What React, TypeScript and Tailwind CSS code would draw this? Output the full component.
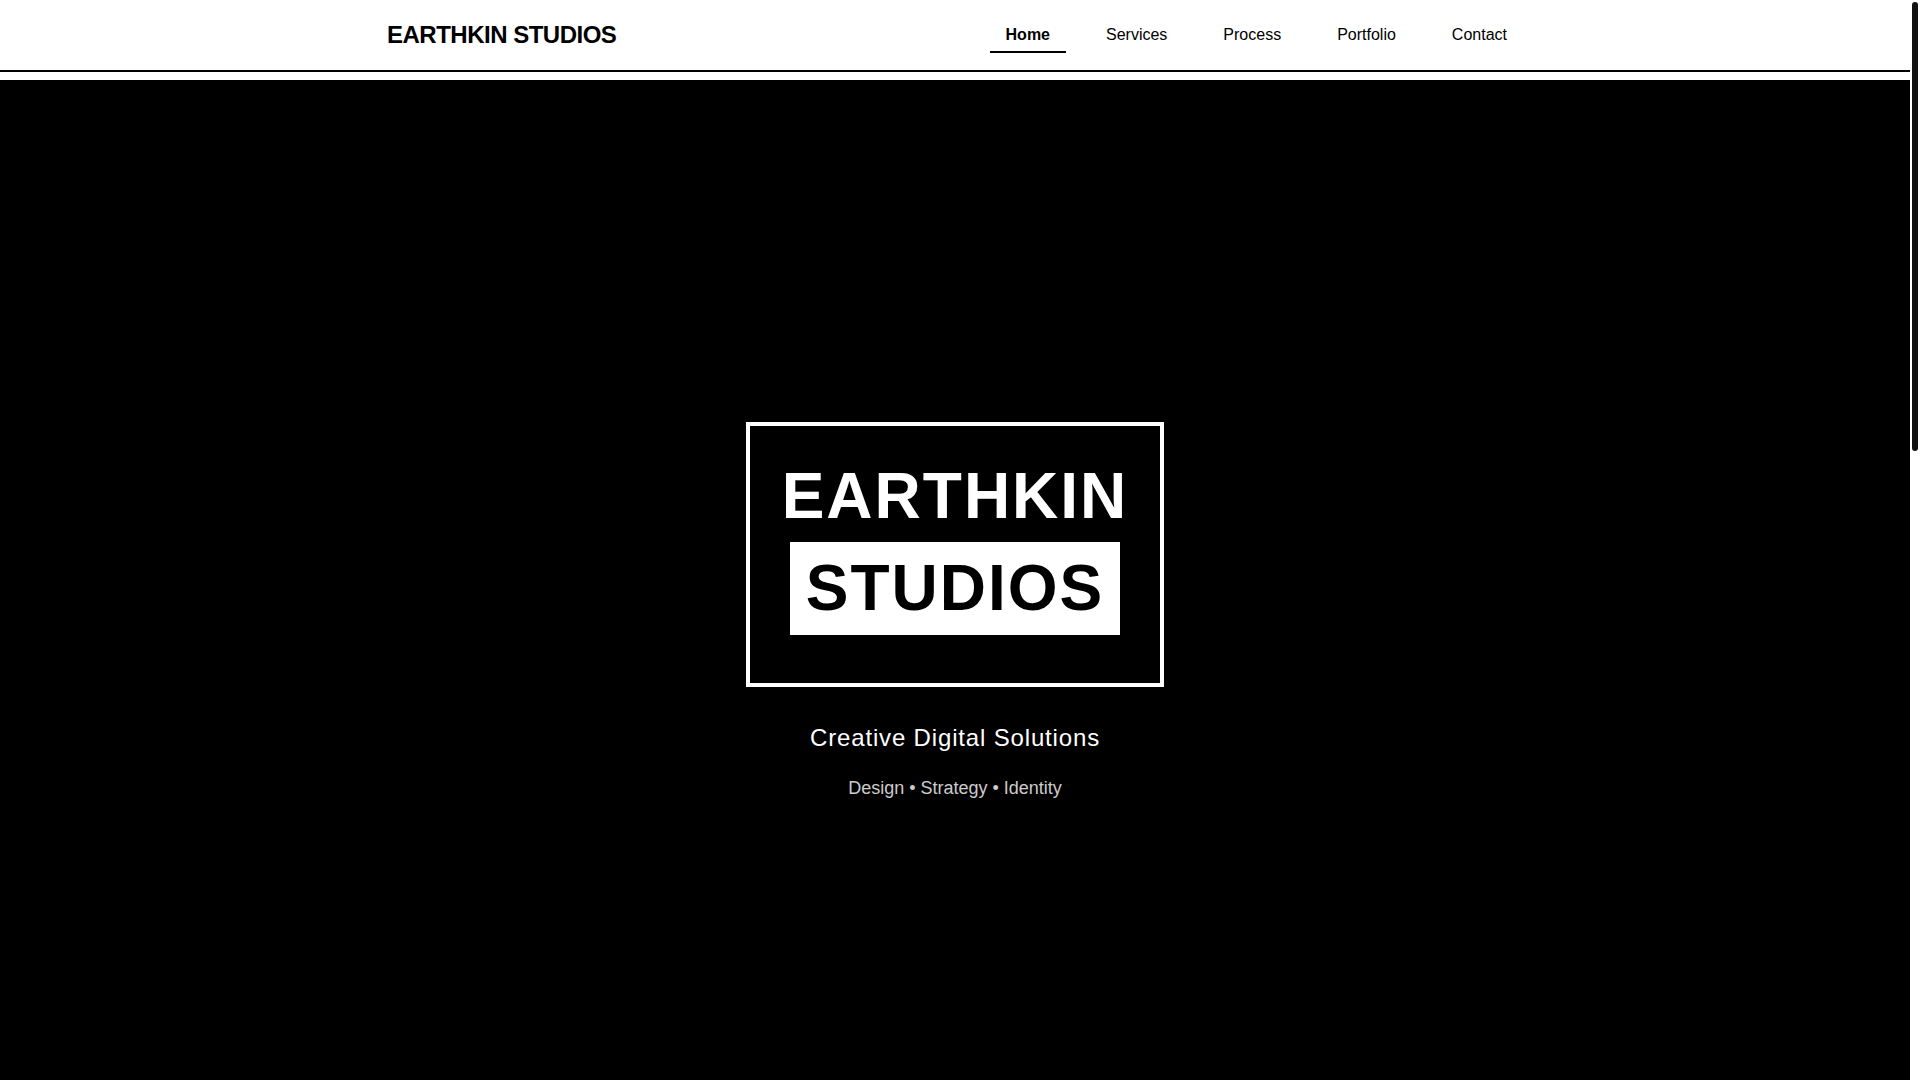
const links = [
  { label: "Home", href: "#home" },
  { label: "Services", href: "#services" },
  { label: "Process", href: "#process" },
  { label: "Portfolio", href: "#portfolio" },
  { label: "Contact", href: "#contact" },
];

function Header({ active }: { active: string }) {
  return (
    <header className="border-b-2 border-black bg-white">
      <div className="mx-auto flex h-[70px] max-w-[1200px] items-center justify-between px-8">
        <a href="#home" className="text-2xl font-bold tracking-[-0.5px]">
          EARTHKIN STUDIOS
        </a>
        <nav>
          <ul className="flex gap-6">
            {links.map((link) => (
              <li key={link.href}>
                <a
                  href={link.href}
                  className={`block border-b-2 px-4 pt-2 pb-1.5 text-base leading-5 ${
                    link.label === active ? "border-black font-bold" : "border-transparent"
                  }`}
                >
                  {link.label}
                </a>
              </li>
            ))}
          </ul>
        </nav>
      </div>
    </header>
  );
}

function Hero() {
  return (
    <section
      id="home"
      className="mt-2 flex min-h-screen flex-col items-center justify-center bg-black pb-3.5 text-center text-white"
    >
      <h1 className="border-4 border-white px-8 pt-8 pb-12 text-[64px] leading-[77px] font-bold tracking-[2px]">
        <span className="block">EARTHKIN</span>
        <span className="mt-[7px] inline-block bg-white px-4 py-2 align-top text-black">STUDIOS</span>
      </h1>
      <p className="mt-8 text-2xl leading-[38px] tracking-[0.035em]">Creative Digital Solutions</p>
      <p className="mt-4 text-lg leading-[31px] text-[#cccccc]">Design • Strategy • Identity</p>
    </section>
  );
}

export default function App() {
  return (
    <div className="flex h-screen overflow-hidden bg-white font-['Liberation_Sans',Arial,sans-serif] text-black">
      <main className="min-w-0 flex-1">
        <Header active="Home" />
        <Hero />
      </main>
      {/* scroll track */}
      <div className="w-[10px] bg-white p-[2px]" aria-hidden="true">
        <div className="h-[449px] rounded-full bg-[#111111]" />
      </div>
    </div>
  );
}
